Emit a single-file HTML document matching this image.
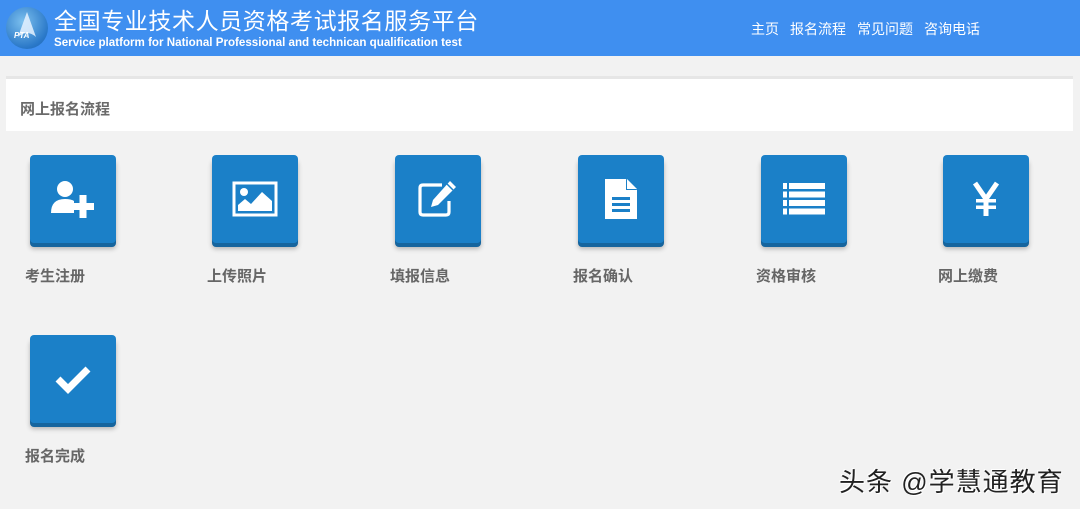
<!DOCTYPE html>
<html><head><meta charset="utf-8"><style>
*{margin:0;padding:0;box-sizing:border-box}
body{width:1080px;height:509px;background:#f2f2f2;font-family:"Liberation Sans","Noto Sans CJK SC",sans-serif;position:relative;overflow:hidden}
.hd{position:absolute;left:0;top:0;width:1080px;height:56px;background:#3f8ff0}
.logo{position:absolute;left:6px;top:7px;width:42px;height:42px;border-radius:50%;background:radial-gradient(circle at 40% 35%,#7cc0ee,#2a78c8 70%,#1d5fa8);}
.t1{position:absolute;left:54px;top:2px;color:#fff;font-size:23px;letter-spacing:0.6px;white-space:nowrap}
.t2{position:absolute;left:54px;top:36px;color:#fff;font-size:11.6px;font-weight:bold;white-space:nowrap}
.nav{position:absolute;left:751px;top:19px;color:#fff;font-size:14px;white-space:nowrap}
.nav span{margin-right:11px}
.panel{position:absolute;left:6px;top:76px;width:1067px;height:55px;background:#fff;border-top:3px solid #e6e6e6}
.panel div{position:absolute;left:14px;top:19px;font-size:15px;font-weight:bold;color:#6a6a6a}
.btn{position:absolute;width:86px;height:88px;background:#1b80c8;border-radius:4px;box-shadow:0 4px 0 #16659e,0 6px 5px rgba(0,0,0,.25);display:flex;align-items:center;justify-content:center}
.lb{position:absolute;font-size:15px;font-weight:bold;color:#666}
.wm{position:absolute;left:839px;top:462px;font-size:26px;letter-spacing:1px;color:#222;text-shadow:1px 1px 0 #fff,-1px -1px 0 #fff;white-space:nowrap}
</style></head><body>
<div class="hd">
<div class="logo"><svg width="42" height="42" viewBox="0 0 42 42"><path d="M21 5 L12 30 Q21 22 30 30 Z" fill="#e6f2ff" opacity=".85"/><text x="8" y="31" font-size="8" font-weight="bold" font-style="italic" fill="#fff" font-family="Liberation Sans">PTA</text></svg></div>
<div class="t1">全国专业技术人员资格考试报名服务平台</div>
<div class="t2">Service platform for National Professional and technican qualification test</div>
<div class="nav"><span>主页</span><span>报名流程</span><span>常见问题</span><span>咨询电话</span></div>
</div>
<div class="panel"><div>网上报名流程</div></div>

<div class="btn" style="left:30px;top:155px"><svg width="48" height="40" viewBox="0 0 48 40"><circle cx="16" cy="10" r="8" fill="#fff"/><path d="M2 34 Q2 20 16 20 Q22 20 25 22 L25 34 Z" fill="#fff"/><rect x="23" y="24" width="22" height="7" fill="#fff"/><rect x="30.5" y="16" width="7" height="23" fill="#fff"/></svg></div>
<div class="lb" style="left:25px;top:265px">考生注册</div>

<div class="btn" style="left:212px;top:155px"><svg width="46" height="36" viewBox="0 0 46 36"><rect x="2" y="2" width="42" height="32" fill="none" stroke="#fff" stroke-width="3"/><circle cx="12" cy="11" r="4" fill="#fff"/><path d="M6 30 L6 24 L13 18 L19 23 L30 11 L40 20 L40 30 Z" fill="#fff"/></svg></div>
<div class="lb" style="left:207px;top:265px">上传照片</div>

<div class="btn" style="left:395px;top:155px"><svg width="44" height="40" viewBox="0 0 44 40"><path d="M26 6 H7 Q4 6 4 9 V33 Q4 36 7 36 H30 Q33 36 33 33 V22" fill="none" stroke="#fff" stroke-width="3.2"/><path d="M34 2 L40 8 L22 26 L15 28 L17 21 Z" fill="#fff"/><path d="M31 5 L37 11" stroke="#1b80c8" stroke-width="1.5"/></svg></div>
<div class="lb" style="left:390px;top:265px">填报信息</div>

<div class="btn" style="left:578px;top:155px"><svg width="36" height="44" viewBox="0 0 36 44"><path d="M2 2 H23 L34 13 V42 H2 Z" fill="#fff"/><path d="M23 2 V13 H34" fill="#1b80c8"/><path d="M24 2 L34 12 L24 12 Z" fill="#fff"/><rect x="9" y="20" width="18" height="3" fill="#1b80c8"/><rect x="9" y="26" width="18" height="3" fill="#1b80c8"/><rect x="9" y="32" width="18" height="3" fill="#1b80c8"/></svg></div>
<div class="lb" style="left:573px;top:265px">报名确认</div>

<div class="btn" style="left:761px;top:155px"><svg width="42" height="32" viewBox="0 0 42 32"><g fill="#fff"><rect x="0" y="0" width="4" height="6"/><rect x="6" y="0" width="36" height="6"/><rect x="0" y="8.5" width="4" height="6"/><rect x="6" y="8.5" width="36" height="6"/><rect x="0" y="17" width="4" height="6"/><rect x="6" y="17" width="36" height="6"/><rect x="0" y="25.5" width="4" height="6"/><rect x="6" y="25.5" width="36" height="6"/></g></svg></div>
<div class="lb" style="left:756px;top:265px">资格审核</div>

<div class="btn" style="left:943px;top:155px"><svg width="26" height="36" viewBox="0 0 26 36"><path d="M2 2 L13 18 L24 2" fill="none" stroke="#fff" stroke-width="5"/><rect x="10.5" y="16" width="5" height="19" fill="#fff"/><rect x="3" y="18" width="20" height="3.5" fill="#fff"/><rect x="3" y="24.5" width="20" height="3.5" fill="#fff"/></svg></div>
<div class="lb" style="left:938px;top:265px">网上缴费</div>

<div class="btn" style="left:30px;top:335px"><svg width="38" height="30" viewBox="0 0 38 30"><path d="M4 15 L14 25 L34 5" fill="none" stroke="#fff" stroke-width="7"/></svg></div>
<div class="lb" style="left:25px;top:445px">报名完成</div>

<div class="wm">头条 @学慧通教育</div>
</body></html>
